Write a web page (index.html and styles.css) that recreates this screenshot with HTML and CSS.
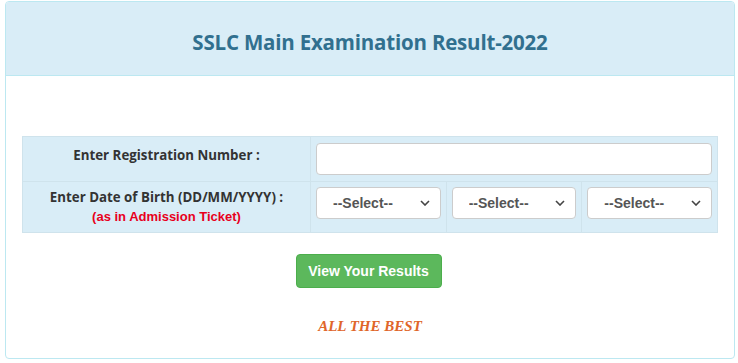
FILE: index.html
```html
<!DOCTYPE html>
<html lang="en">
  <head>
    <meta charset="UTF-8" />
    <meta name="viewport" content="width=device-width, initial-scale=1.0" />
    <title>SSLC Main Examination Result-2022</title>
    <link rel="stylesheet" href="styles.css">
  </head>
  <body>
    <div class="panel">
      <div class="panel-heading">
        <h3>SSLC Main Examination Result-2022</h3>
      </div>
      <div class="panel-body">
        <table class="result-form">
          <tr class="row-reg">
            <th>Enter Registration Number :</th>
            <td colspan="3"><input type="text" class="form-control" /></td>
          </tr>
          <tr class="row-dob">
            <th>
              Enter Date of Birth (DD/MM/YYYY) :
              <span class="hint">(as in Admission Ticket)</span>
            </th>
            <td><select class="form-control"><option>--Select--</option></select></td>
            <td><select class="form-control"><option>--Select--</option></select></td>
            <td><select class="form-control"><option>--Select--</option></select></td>
          </tr>
        </table>
        <div class="actions">
          <button class="btn-success">View Your Results</button>
        </div>
        <p class="best">ALL THE BEST</p>
      </div>
    </div>
  </body>
</html>
```

FILE: styles.css
```css
body {
  margin: 0;
  background: #fff;
  font-family: "Liberation Sans", Arial, sans-serif;
  color: #333;
}
.panel {
  margin: 1px 3px 0 5px;
  border: 1px solid #bce8f1;
  border-radius: 4px;
  box-sizing: border-box;
  height: 358px;
}
.panel-heading {
  background: #d9edf7;
  border-bottom: 1px solid #bce8f1;
  border-radius: 3px 3px 0 0;
  height: 74px;
  box-sizing: border-box;
  padding-top: 6px;
  display: flex;
  align-items: center;
  justify-content: center;
}
.panel-heading h3 {
  margin: 0;
  font-family: "Open Sans", sans-serif;
  font-size: 20.5px;
  font-weight: 700;
  color: #31708f;
  letter-spacing: -0.2px;
}
.panel-body {
  padding: 60px 16px 0 16px;
}
.result-form {
  width: 100%;
  border-collapse: collapse;
  background: #d9edf7;
}
.result-form th,
.result-form td {
  border: 1px solid #cfe3ec;
}
.result-form th {
  width: 275px;
  padding: 0 6px;
  font-family: "Open Sans", sans-serif;
  font-size: 13.3px;
  font-weight: 700;
  color: #333;
  text-align: center;
  line-height: 19px;
  vertical-align: middle;
}
.row-reg th {
  padding-bottom: 8px;
}
.result-form td {
  vertical-align: top;
}
.row-reg td {
  padding: 6px 5px;
}
.row-dob td {
  padding: 5px 5px 13px;
}
.hint {
  display: block;
  font-family: "Liberation Sans", Arial, sans-serif;
  font-size: 13px;
  color: #e8001c;
}
.form-control {
  display: block;
  width: 100%;
  height: 32px;
  box-sizing: border-box;
  border: 1px solid #ccc;
  border-radius: 4px;
  background: #fff;
  font-family: "Liberation Sans", Arial, sans-serif;
  font-size: 14px;
  font-weight: 700;
  color: #555;
}
select.form-control {
  appearance: none;
  padding: 0 12px 0 16px;
  background-image: url("data:image/svg+xml;utf8,<svg xmlns='http://www.w3.org/2000/svg' width='10' height='6'><path d='M1 1l4 4 4-4' fill='none' stroke='%23444' stroke-width='1.6'/></svg>");
  background-repeat: no-repeat;
  background-position: right 10px center;
}
.actions {
  text-align: center;
  margin-top: 21px;
}
.btn-success {
  background: #5cb85c;
  border: 1px solid #4cae4c;
  border-radius: 4px;
  color: #fff;
  font-family: "Liberation Sans", Arial, sans-serif;
  font-size: 14px;
  font-weight: 700;
  width: 146px;
  height: 34px;
  margin-right: 3px;
}
.best {
  margin: 30px 0 0;
  text-align: center;
  font-family: "Liberation Serif", serif;
  font-style: italic;
  font-weight: 700;
  font-size: 15px;
  color: #e0662a;
}
```
